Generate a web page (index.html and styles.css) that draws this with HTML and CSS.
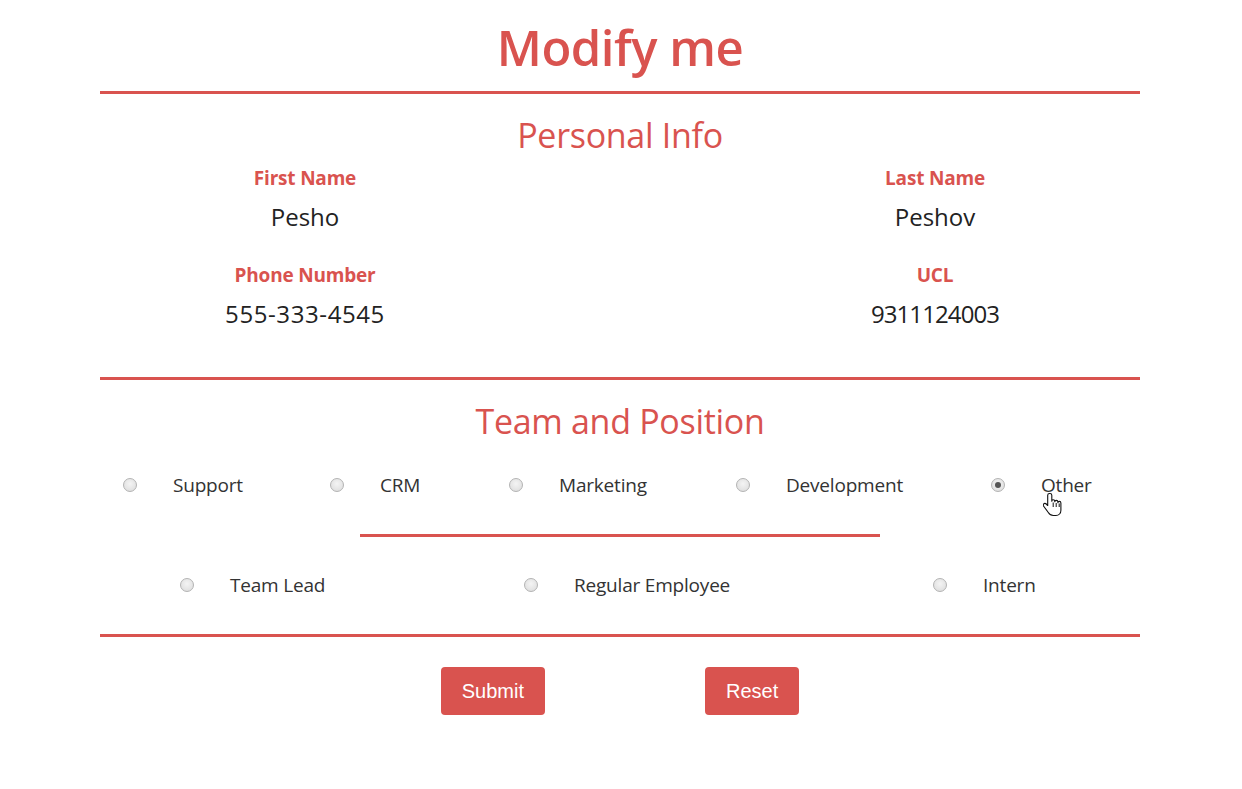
FILE: index.html
```html
<!DOCTYPE html>
<html>
<head>
<meta charset="utf-8">
<title>Modify me</title>
<link rel="stylesheet" href="styles.css">
</head>
<body>
<div class="container">
  <h1 class="title">Modify me</h1>
  <hr class="rule">
  <h2 class="section-title">Personal Info</h2>
  <div class="fields">
    <div class="field">
      <div class="label">First Name</div>
      <div class="value">Pesho</div>
    </div>
    <div class="field">
      <div class="label">Last Name</div>
      <div class="value">Peshov</div>
    </div>
    <div class="field second">
      <div class="label">Phone Number</div>
      <div class="value phone">555-333-4545</div>
    </div>
    <div class="field second">
      <div class="label">UCL</div>
      <div class="value ucl">9311124003</div>
    </div>
  </div>
  <hr class="rule rule-b">
  <h2 class="section-title">Team and Position</h2>
  <div class="radios teams">
    <label class="opt"><span class="radio"></span><span class="opt-text">Support</span></label>
    <label class="opt"><span class="radio"></span><span class="opt-text">CRM</span></label>
    <label class="opt"><span class="radio"></span><span class="opt-text">Marketing</span></label>
    <label class="opt"><span class="radio"></span><span class="opt-text">Development</span></label>
    <label class="opt other"><span class="radio checked"></span><span class="opt-text">Other</span>
      <svg class="cursor" width="20" height="26" viewBox="0 0 20 26">
        <path d="M6.5 1.5c-1 0-1.8.8-1.8 1.8v10.2l-1.4-1.5c-.8-.8-2-.8-2.6 0-.6.6-.5 1.6 0 2.2l4.6 6.3c1 1.6 2.5 3 5 3h2.6c3 0 5-2.3 5-5.3V11c0-.9-.7-1.6-1.6-1.6-.8 0-1.4.6-1.4 1.4V10c0-.9-.7-1.6-1.6-1.6-.8 0-1.5.6-1.5 1.4v-.4c0-.9-.7-1.6-1.6-1.6-.8 0-1.4.6-1.4 1.4V3.3c0-1-.8-1.8-1.8-1.8z" fill="#fff" stroke="#111" stroke-width="1.1" stroke-linejoin="round"/>
        <path d="M10.2 10.5v4.5M13.2 11v4M16.2 11.5v3.5" stroke="#111" stroke-width="1" fill="none"/>
      </svg>
    </label>
  </div>
  <div class="divider"></div>
  <div class="radios positions">
    <label class="opt"><span class="radio"></span><span class="opt-text">Team Lead</span></label>
    <label class="opt"><span class="radio"></span><span class="opt-text">Regular Employee</span></label>
    <label class="opt"><span class="radio"></span><span class="opt-text">Intern</span></label>
  </div>
  <hr class="rule rule-c">
  <div class="buttons">
    <button class="btn">Submit</button>
    <button class="btn">Reset</button>
  </div>
</div>
</body>
</html>
```

FILE: styles.css
```css
* { box-sizing: border-box; }
html, body { margin: 0; padding: 0; background: #fff; }
body {
  font-family: "Open Sans", "Noto Sans", sans-serif;
  color: #222;
}
.container {
  width: 1040px;
  margin: 0 0 0 100px;
  padding-top: 17px;
  padding-bottom: 74px;
}
.title {
  margin: 0;
  height: 60px;
  line-height: 60px;
  text-align: center;
  color: #d9534f;
  font-size: 49px;
  font-weight: 600;
  letter-spacing: -0.5px;
}
.rule {
  margin: 14px 0 0;
  border: 0;
  height: 3px;
  background: #d9534f;
}
.section-title {
  margin: 21px 0 0;
  height: 40px;
  line-height: 40px;
  text-align: center;
  color: #d9534f;
  font-size: 34px;
  font-weight: 400;
  letter-spacing: -0.3px;
}
.fields {
  display: grid;
  grid-template-columns: 410px 410px;
  justify-content: space-between;
  margin-top: 11px;
}
.field { text-align: center; }
.field.second { margin-top: 31px; }
.label {
  height: 24px;
  line-height: 24px;
  color: #d9534f;
  font-weight: 700;
  font-size: 19px;
  letter-spacing: -0.2px;
}
.value {
  margin-top: 12px;
  height: 30px;
  line-height: 30px;
  font-size: 24px;
  color: #222;
}
.value.phone { letter-spacing: 0.6px; }
.value.ucl { letter-spacing: -0.9px; }
.rule-b { margin-top: 48px; }
.rule-c { margin-top: 34px; }
.radios {
  display: flex;
  align-items: center;
  height: 30px;
}
.teams {
  margin-top: 29px;
  padding-left: 23px;
}
.positions {
  margin-top: 33px;
  padding-left: 80px;
}
.opt {
  display: flex;
  align-items: center;
  height: 30px;
  font-size: 19px;
  color: #333;
  position: relative;
}
.teams .opt:nth-child(1) { width: 207px; }
.teams .opt:nth-child(2) { width: 179px; }
.teams .opt:nth-child(3) { width: 227px; }
.teams .opt:nth-child(4) { width: 255px; }
.positions .opt:nth-child(1) { width: 344px; }
.positions .opt:nth-child(2) { width: 409px; }
.radio {
  width: 14px;
  height: 14px;
  border-radius: 50%;
  border: 1px solid #b3b3b3;
  background: radial-gradient(circle at 50% 40%, #f4f4f4 0%, #e2e2e2 70%, #d6d6d6 100%);
  margin-right: 36px;
  flex: none;
  position: relative;
}
.radio.checked::after {
  content: "";
  position: absolute;
  left: 3px;
  top: 3px;
  width: 6px;
  height: 6px;
  border-radius: 50%;
  background: #555;
}
.opt-text { white-space: nowrap; letter-spacing: -0.2px; }
.cursor {
  position: absolute;
  left: 52px;
  top: 22px;
}
.divider {
  width: 520px;
  height: 3px;
  background: #d9534f;
  margin: 34px auto 0;
}
.buttons {
  display: flex;
  justify-content: center;
  gap: 160px;
  margin-top: 30px;
}
.btn {
  height: 48px;
  border: 0;
  border-radius: 4px;
  background: #d9534f;
  color: #fff;
  font-family: "Liberation Sans", Arial, sans-serif;
  font-size: 20px;
  padding: 0 21px;
}
```
